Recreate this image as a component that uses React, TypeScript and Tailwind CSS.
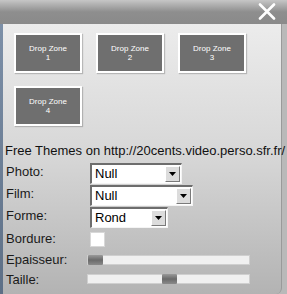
import React from "react";

function Select({ value, width }: { value: string; width: number }) {
  return (
    <div
      className="flex h-[21px] items-stretch border-t-2 border-l-2 border-t-[#6d6d6d] border-l-[#6d6d6d] border-b border-r border-b-[#f4f4f4] border-r-[#f4f4f4] bg-white"
      style={{ width }}
    >
      <div className="flex-1 pl-[3px] text-[13px] leading-[18px] text-black">{value}</div>
      <div className="m-[1px] flex w-[15px] items-center justify-center border border-t-white border-l-white border-b-[#7a7a7a] border-r-[#7a7a7a] bg-[#dcdcdc]">
        <svg width="7" height="4" viewBox="0 0 7 4">
          <path d="M0 0h7L3.5 4z" fill="#000" />
        </svg>
      </div>
    </div>
  );
}

function Slider({ pos }: { pos: number }) {
  return (
    <div className="relative h-[10px] w-[163px] border border-[#cfcfcf] bg-[#f0f0f0]">
      <div
        className="absolute top-[-1px] h-[10px] w-[15px] rounded-[1px] bg-gradient-to-b from-[#9a9a9a] via-[#6a6a6a] to-[#8a8a8a]"
        style={{ left: pos }}
      />
    </div>
  );
}

function Zone({ n }: { n: number }) {
  return (
    <div className="flex h-[40px] w-[68px] flex-col items-center justify-center border-2 border-white bg-[#6f6f6f] text-center text-[8px] leading-[9px] text-white shadow-[1px_1px_1px_rgba(0,0,0,0.2)]">
      <span>Drop Zone</span>
      <span>{n}</span>
    </div>
  );
}

export default function App() {
  return (
    <div
      className="relative flex h-[294px] w-[287px] flex-col overflow-hidden bg-[#b9b9b9]"
      style={{ fontFamily: '"Liberation Sans", Arial, sans-serif' }}
    >
      <div className="flex h-[24px] shrink-0 items-start justify-end bg-gradient-to-b from-[#c6c6c6] via-[#8e8e8e] to-[#8a8a8a] pr-[11px] pt-[3px]">
        <svg width="18" height="17" viewBox="0 0 18 17">
          <path d="M2 1.5L16 15.5M16 1.5L2 15.5" stroke="#fff" strokeWidth="2.6" strokeLinecap="round" />
        </svg>
      </div>
      <div className="flex flex-1">
        <div className="w-[3px] bg-gradient-to-b from-[#7d90a8] to-[#5d6f86]" />
        <div className="flex w-[279px] flex-col rounded-br-[6px] border-r border-[#9a9a9a] bg-gradient-to-b from-[#ececec] via-[#d6d6d6] to-[#b3b3b3]">
          <div className="grid grid-cols-[68px_68px_68px] gap-x-[14px] gap-y-[13px] pl-[11px] pt-[9px]">
            <Zone n={1} />
            <Zone n={2} />
            <Zone n={3} />
            <Zone n={4} />
          </div>
          <div className="mt-[17px] whitespace-nowrap pl-[2px] text-[13px] leading-[16px] text-[#111]">
            Free Themes on http://20cents.video.perso.sfr.fr/
          </div>
          <div className="flex flex-col pl-[3px] pt-[4px] text-[13px] leading-[15px] text-[#1a1a1a]">
            <div className="flex h-[22px] items-start">
              <span className="w-[84px] pt-[1px]">Photo:</span>
              <Select value="Null" width={92} />
            </div>
            <div className="flex h-[22px] items-start">
              <span className="w-[84px] pt-[1px]">Film:</span>
              <Select value="Null" width={103} />
            </div>
            <div className="flex h-[24px] items-start">
              <span className="w-[84px] pt-[1px]">Forme:</span>
              <Select value="Rond" width={78} />
            </div>
            <div className="flex h-[21px] items-start">
              <span className="w-[84px]">Bordure:</span>
              <div className="mt-[1px] h-[15px] w-[15px] border border-[#d8d8d8] bg-white" />
            </div>
            <div className="flex h-[20px] items-start">
              <span className="w-[81px]">Epaisseur:</span>
              <div className="mt-[3px]">
                <Slider pos={0} />
              </div>
            </div>
            <div className="flex h-[20px] items-start">
              <span className="w-[81px]">Taille:</span>
              <div className="mt-[2px]">
                <Slider pos={74} />
              </div>
            </div>
          </div>
        </div>
      </div>
    </div>
  );
}
